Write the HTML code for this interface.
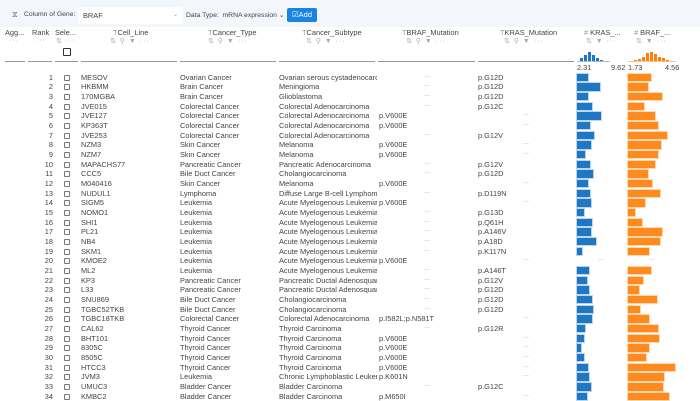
<!DOCTYPE html>
<html><head><meta charset="utf-8"><style>
*{margin:0;padding:0;box-sizing:border-box}
body{width:700px;height:400px;overflow:hidden;background:#fff;font-family:"Liberation Sans",sans-serif;font-size:7.4px;color:#444;position:relative}
.tb{position:absolute;left:0;top:0;width:700px;height:27px;background:#f3f6fa}
.a{position:absolute;white-space:nowrap}
.sel{position:absolute;left:78px;top:7px;width:105px;height:17px;background:#fff;border-radius:3px}
.btn{position:absolute;left:287px;top:8px;width:30px;height:14px;background:#1a84e0;border-radius:2px;color:#fff;font-size:7.5px;line-height:14px;text-align:center}
.hl{position:absolute;top:61px;height:1px;background:#999}
.ic{position:absolute;top:37px;color:#aaa;font-size:7px;white-space:nowrap;letter-spacing:1px}
.rows{position:absolute;left:0;top:72.5px;width:700px}
.r{height:9.68px;position:relative;line-height:9.68px}
.r span{position:absolute;white-space:nowrap;overflow:hidden}
.rk{left:30px;width:23px;text-align:right}
.cb{position:absolute;left:64px;top:2px;width:6px;height:6px;border:1px solid #777;border-radius:1px}
.c1{left:81px;width:96px}.c2{left:180px;width:96px}.c3{left:279px;width:98px}
.c4{left:379px;width:96px}.c5{left:478px;width:96px}
.d4{left:424px;color:#ccc;font-size:6px}.d5{left:523px;color:#ccc;font-size:6px}
.k,.o{position:absolute;top:1px;height:7.5px}
.k{left:577px;background:#1f77c4;box-shadow:0 0 0 1px #b9d6ee}
.o{left:628px;background:#ff8a1e;box-shadow:0 0 0 1px #ffd7b0}
.h{position:absolute;bottom:0;background:#1f77c4}
.ho{position:absolute;bottom:0;background:#ff7f0e}
</style></head><body>
<div class="tb"></div>
<div class="a" style="left:12px;top:10px;color:#666;font-size:8px">⧖</div>
<div class="a" style="left:24px;top:11px;font-size:6.8px">Column of Gene:</div>
<div class="sel"><span class="a" style="left:5px;top:4px">BRAF</span><span class="a" style="left:95px;top:4px;color:#999;font-size:6px">⌄</span></div>
<div class="a" style="left:186px;top:11px;font-size:6.8px">Data Type:&nbsp; mRNA expression ⌄</div>
<div class="btn">☑Add</div>

<div class="a" style="left:5px;top:28px">Agg...</div>
<div class="a" style="left:32px;top:28px">Rank</div>
<div class="a" style="left:55px;top:28px">Sele...</div>
<div class="a" style="left:113px;top:28px"><span style="color:#999">T</span>Cell_Line</div>
<div class="a" style="left:208px;top:28px"><span style="color:#999">T</span>Cancer_Type</div>
<div class="a" style="left:302px;top:28px"><span style="color:#999">T</span>Cancer_Subtype</div>
<div class="a" style="left:402px;top:28px"><span style="color:#999">T</span>BRAF_Mutation</div>
<div class="a" style="left:500px;top:28px"><span style="color:#999">T</span>KRAS_Mutation</div>
<div class="a" style="left:584px;top:28px"><span style="color:#999">#</span> KRAS_...</div>
<div class="a" style="left:634px;top:28px"><span style="color:#999">#</span> BRAF_...</div>
<div class="ic" style="left:9px">···</div>
<div class="ic" style="left:36px">···</div>
<div class="ic" style="left:56px">⇅ ···</div>
<div class="ic" style="left:110px">⇅ ⚲ ▼ ···</div>
<div class="ic" style="left:208px">⇅ ⚲ ▼ ···</div>
<div class="ic" style="left:306px">⇅ ⚲ ▼ ···</div>
<div class="ic" style="left:406px">⇅ ⚲ ▼ ···</div>
<div class="ic" style="left:504px">⇅ ⚲ ▼ ···</div>
<div class="ic" style="left:586px">⇅ ▼ ···</div>
<div class="ic" style="left:636px">⇅ ▼ ···</div>
<div class="a" style="left:63px;top:48px;width:8px;height:8px;border:1.3px solid #333;border-radius:1px"></div>
<div class="hl" style="left:5px;width:20px"></div>
<div class="hl" style="left:28px;width:24px"></div>
<div class="hl" style="left:55px;width:23px"></div>
<div class="hl" style="left:81px;width:96px"></div>
<div class="hl" style="left:180px;width:96px"></div>
<div class="hl" style="left:279px;width:96px"></div>
<div class="hl" style="left:378px;width:97px"></div>
<div class="hl" style="left:478px;width:96px"></div>
<div class="a" style="left:577px;top:50px;width:33px;height:12px;border-bottom:1px solid #9cc3e6">
<div class="h" style="left:3px;width:3px;height:3px"></div><div class="h" style="left:7px;width:3px;height:6px"></div><div class="h" style="left:11px;width:3px;height:9px"></div><div class="h" style="left:15px;width:3px;height:6px"></div><div class="h" style="left:19px;width:3px;height:3px"></div><div class="h" style="left:23px;width:3px;height:1px"></div></div>
<div class="a" style="left:628px;top:50px;width:48px;height:12px;border-bottom:1px solid #ffbf88">
<div class="ho" style="left:6px;width:3px;height:1px"></div><div class="ho" style="left:10px;width:3px;height:2px"></div><div class="ho" style="left:14px;width:3px;height:4px"></div><div class="ho" style="left:18px;width:3px;height:8px"></div><div class="ho" style="left:22px;width:3px;height:9px"></div><div class="ho" style="left:26px;width:3px;height:7px"></div><div class="ho" style="left:30px;width:3px;height:4px"></div><div class="ho" style="left:34px;width:3px;height:3px"></div><div class="ho" style="left:38px;width:3px;height:1px"></div></div>
<div class="a" style="left:577px;top:63px">2.31</div>
<div class="a" style="left:611px;top:63px">9.62</div>
<div class="a" style="left:628px;top:63px">1.73</div>
<div class="a" style="left:665px;top:63px">4.56</div>

<div class="rows">
<div class="r"><span class="rk">1</span><i class="cb"></i><span class="c1">MESOV</span><span class="c2">Ovarian Cancer</span><span class="c3">Ovarian serous cystadenocarcinoma</span><span class="d4">—</span><span class="c5">p.G12D</span><b class="k" style="width:11px"></b><b class="o" style="width:23px"></b></div>
<div class="r"><span class="rk">2</span><i class="cb"></i><span class="c1">HKBMM</span><span class="c2">Brain Cancer</span><span class="c3">Meningioma</span><span class="d4">—</span><span class="c5">p.G12D</span><b class="k" style="width:23px"></b><b class="o" style="width:20px"></b></div>
<div class="r"><span class="rk">3</span><i class="cb"></i><span class="c1">170MGBA</span><span class="c2">Brain Cancer</span><span class="c3">Glioblastoma</span><span class="d4">—</span><span class="c5">p.G12D</span><b class="k" style="width:11px"></b><b class="o" style="width:34px"></b></div>
<div class="r"><span class="rk">4</span><i class="cb"></i><span class="c1">JVE015</span><span class="c2">Colorectal Cancer</span><span class="c3">Colorectal Adenocarcinoma</span><span class="d4">—</span><span class="c5">p.G12C</span><b class="k" style="width:15px"></b><b class="o" style="width:16px"></b></div>
<div class="r"><span class="rk">5</span><i class="cb"></i><span class="c1">JVE127</span><span class="c2">Colorectal Cancer</span><span class="c3">Colorectal Adenocarcinoma</span><span class="c4">p.V600E</span><span class="d5">—</span><b class="k" style="width:24px"></b><b class="o" style="width:27px"></b></div>
<div class="r"><span class="rk">6</span><i class="cb"></i><span class="c1">KP363T</span><span class="c2">Colorectal Cancer</span><span class="c3">Colorectal Adenocarcinoma</span><span class="c4">p.V600E</span><span class="d5">—</span><b class="k" style="width:13px"></b><b class="o" style="width:30px"></b></div>
<div class="r"><span class="rk">7</span><i class="cb"></i><span class="c1">JVE253</span><span class="c2">Colorectal Cancer</span><span class="c3">Colorectal Adenocarcinoma</span><span class="d4">—</span><span class="c5">p.G12V</span><b class="k" style="width:17px"></b><b class="o" style="width:39px"></b></div>
<div class="r"><span class="rk">8</span><i class="cb"></i><span class="c1">NZM3</span><span class="c2">Skin Cancer</span><span class="c3">Melanoma</span><span class="c4">p.V600E</span><span class="d5">—</span><b class="k" style="width:14px"></b><b class="o" style="width:33px"></b></div>
<div class="r"><span class="rk">9</span><i class="cb"></i><span class="c1">NZM7</span><span class="c2">Skin Cancer</span><span class="c3">Melanoma</span><span class="c4">p.V600E</span><span class="d5">—</span><b class="k" style="width:8px"></b><b class="o" style="width:30px"></b></div>
<div class="r"><span class="rk">10</span><i class="cb"></i><span class="c1">MAPACHS77</span><span class="c2">Pancreatic Cancer</span><span class="c3">Pancreatic Adenocarcinoma</span><span class="d4">—</span><span class="c5">p.G12V</span><b class="k" style="width:13px"></b><b class="o" style="width:27px"></b></div>
<div class="r"><span class="rk">11</span><i class="cb"></i><span class="c1">CCC5</span><span class="c2">Bile Duct Cancer</span><span class="c3">Cholangiocarcinoma</span><span class="d4">—</span><span class="c5">p.G12D</span><b class="k" style="width:16px"></b><b class="o" style="width:20px"></b></div>
<div class="r"><span class="rk">12</span><i class="cb"></i><span class="c1">M040416</span><span class="c2">Skin Cancer</span><span class="c3">Melanoma</span><span class="c4">p.V600E</span><span class="d5">—</span><b class="k" style="width:11px"></b><b class="o" style="width:24px"></b></div>
<div class="r"><span class="rk">13</span><i class="cb"></i><span class="c1">NUDUL1</span><span class="c2">Lymphoma</span><span class="c3">Diffuse Large B-cell Lymphoma (DLBCL)</span><span class="d4">—</span><span class="c5">p.D119N</span><b class="k" style="width:13px"></b><b class="o" style="width:32px"></b></div>
<div class="r"><span class="rk">14</span><i class="cb"></i><span class="c1">SIGM5</span><span class="c2">Leukemia</span><span class="c3">Acute Myelogenous Leukemia (AML)</span><span class="c4">p.V600E</span><span class="d5">—</span><b class="k" style="width:14px"></b><b class="o" style="width:17px"></b></div>
<div class="r"><span class="rk">15</span><i class="cb"></i><span class="c1">NOMO1</span><span class="c2">Leukemia</span><span class="c3">Acute Myelogenous Leukemia (AML)</span><span class="d4">—</span><span class="c5">p.G13D</span><b class="k" style="width:7px"></b><b class="o" style="width:7px"></b></div>
<div class="r"><span class="rk">16</span><i class="cb"></i><span class="c1">SHI1</span><span class="c2">Leukemia</span><span class="c3">Acute Myelogenous Leukemia (AML)</span><span class="d4">—</span><span class="c5">p.Q61H</span><b class="k" style="width:15px"></b><b class="o" style="width:14px"></b></div>
<div class="r"><span class="rk">17</span><i class="cb"></i><span class="c1">PL21</span><span class="c2">Leukemia</span><span class="c3">Acute Myelogenous Leukemia (AML)</span><span class="d4">—</span><span class="c5">p.A146V</span><b class="k" style="width:14px"></b><b class="o" style="width:34px"></b></div>
<div class="r"><span class="rk">18</span><i class="cb"></i><span class="c1">NB4</span><span class="c2">Leukemia</span><span class="c3">Acute Myelogenous Leukemia (AML)</span><span class="d4">—</span><span class="c5">p.A18D</span><b class="k" style="width:19px"></b><b class="o" style="width:32px"></b></div>
<div class="r"><span class="rk">19</span><i class="cb"></i><span class="c1">SKM1</span><span class="c2">Leukemia</span><span class="c3">Acute Myelogenous Leukemia (AML)</span><span class="d4">—</span><span class="c5">p.K117N</span><b class="k" style="width:5px"></b><b class="o" style="width:21px"></b></div>
<div class="r"><span class="rk">20</span><i class="cb"></i><span class="c1">KMOE2</span><span class="c2">Leukemia</span><span class="c3">Acute Myelogenous Leukemia (AML)</span><span class="c4">p.V600E</span><span class="d5">—</span><span style="left:598px;color:#ccc;font-size:6px">—</span><span style="left:649px;color:#ccc;font-size:6px">—</span></div>
<div class="r"><span class="rk">21</span><i class="cb"></i><span class="c1">ML2</span><span class="c2">Leukemia</span><span class="c3">Acute Myelogenous Leukemia (AML)</span><span class="d4">—</span><span class="c5">p.A146T</span><b class="k" style="width:12px"></b><b class="o" style="width:23px"></b></div>
<div class="r"><span class="rk">22</span><i class="cb"></i><span class="c1">KP3</span><span class="c2">Pancreatic Cancer</span><span class="c3">Pancreatic Ductal Adenosquamous</span><span class="d4">—</span><span class="c5">p.G12V</span><b class="k" style="width:10px"></b><b class="o" style="width:15px"></b></div>
<div class="r"><span class="rk">23</span><i class="cb"></i><span class="c1">L33</span><span class="c2">Pancreatic Cancer</span><span class="c3">Pancreatic Ductal Adenosquamous</span><span class="d4">—</span><span class="c5">p.G12D</span><b class="k" style="width:12px"></b><b class="o" style="width:11px"></b></div>
<div class="r"><span class="rk">24</span><i class="cb"></i><span class="c1">SNU869</span><span class="c2">Bile Duct Cancer</span><span class="c3">Cholangiocarcinoma</span><span class="d4">—</span><span class="c5">p.G12D</span><b class="k" style="width:15px"></b><b class="o" style="width:29px"></b></div>
<div class="r"><span class="rk">25</span><i class="cb"></i><span class="c1">TGBC52TKB</span><span class="c2">Bile Duct Cancer</span><span class="c3">Cholangiocarcinoma</span><span class="d4">—</span><span class="c5">p.G12D</span><b class="k" style="width:16px"></b><b class="o" style="width:12px"></b></div>
<div class="r"><span class="rk">26</span><i class="cb"></i><span class="c1">TGBC18TKB</span><span class="c2">Colorectal Cancer</span><span class="c3">Colorectal Adenocarcinoma</span><span class="c4">p.I582L;p.N581T</span><span class="d5">—</span><b class="k" style="width:15px"></b><b class="o" style="width:21px"></b></div>
<div class="r"><span class="rk">27</span><i class="cb"></i><span class="c1">CAL62</span><span class="c2">Thyroid Cancer</span><span class="c3">Thyroid Carcinoma</span><span class="d4">—</span><span class="c5">p.G12R</span><b class="k" style="width:8px"></b><b class="o" style="width:30px"></b></div>
<div class="r"><span class="rk">28</span><i class="cb"></i><span class="c1">BHT101</span><span class="c2">Thyroid Cancer</span><span class="c3">Thyroid Carcinoma</span><span class="c4">p.V600E</span><span class="d5">—</span><b class="k" style="width:7px"></b><b class="o" style="width:31px"></b></div>
<div class="r"><span class="rk">29</span><i class="cb"></i><span class="c1">8305C</span><span class="c2">Thyroid Cancer</span><span class="c3">Thyroid Carcinoma</span><span class="c4">p.V600E</span><span class="d5">—</span><b class="k" style="width:4px"></b><b class="o" style="width:21px"></b></div>
<div class="r"><span class="rk">30</span><i class="cb"></i><span class="c1">8505C</span><span class="c2">Thyroid Cancer</span><span class="c3">Thyroid Carcinoma</span><span class="c4">p.V600E</span><span class="d5">—</span><b class="k" style="width:7px"></b><b class="o" style="width:18px"></b></div>
<div class="r"><span class="rk">31</span><i class="cb"></i><span class="c1">HTCC3</span><span class="c2">Thyroid Cancer</span><span class="c3">Thyroid Carcinoma</span><span class="c4">p.V600E</span><span class="d5">—</span><b class="k" style="width:11px"></b><b class="o" style="width:47px"></b></div>
<div class="r"><span class="rk">32</span><i class="cb"></i><span class="c1">JVM3</span><span class="c2">Leukemia</span><span class="c3">Chronic Lymphoblastic Leukemia</span><span class="c4">p.K601N</span><span class="d5">—</span><b class="k" style="width:12px"></b><b class="o" style="width:36px"></b></div>
<div class="r"><span class="rk">33</span><i class="cb"></i><span class="c1">UMUC3</span><span class="c2">Bladder Cancer</span><span class="c3">Bladder Carcinoma</span><span class="d4">—</span><span class="c5">p.G12C</span><b class="k" style="width:14px"></b><b class="o" style="width:35px"></b></div>
<div class="r"><span class="rk">34</span><i class="cb"></i><span class="c1">KMBC2</span><span class="c2">Bladder Cancer</span><span class="c3">Bladder Carcinoma</span><span class="c4">p.M650I</span><span class="d5">—</span><b class="k" style="width:10px"></b><b class="o" style="width:41px"></b></div>
</div>
</body></html>
